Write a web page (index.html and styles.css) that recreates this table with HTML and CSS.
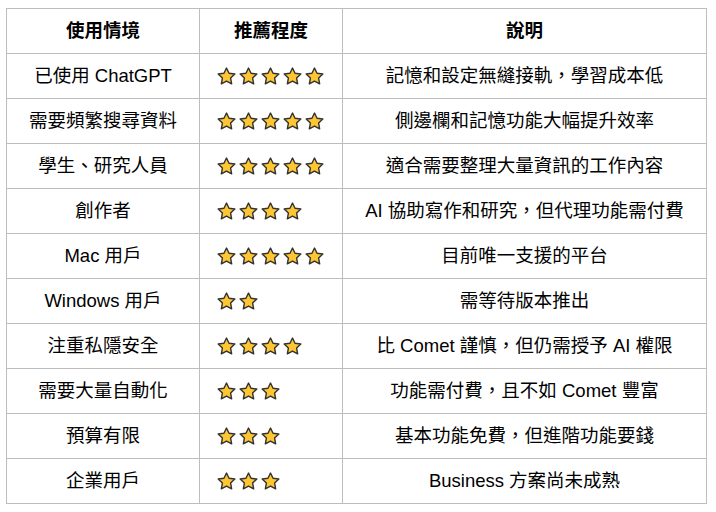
FILE: index.html
```html
<!DOCTYPE html>
<html lang="zh-Hant">
<head>
<meta charset="utf-8">
<link rel="stylesheet" href="styles.css">
</head>
<body>
<svg width="0" height="0" class="defs">
  <defs>
    <symbol id="star" viewBox="0 0 24 24">
      <path d="M12 1.3l3.2 6.6 7.3 1-5.3 5.1 1.3 7.3L12 17.8l-6.5 3.5 1.3-7.3-5.3-5.1 7.3-1z" fill="#FFC633" stroke="#333" stroke-width="1.8" stroke-linejoin="round"/>
    </symbol>
  </defs>
</svg>
<table class="grid">
  <colgroup>
    <col class="c1"><col class="c2"><col class="c3">
  </colgroup>
  <thead>
    <tr><th>使用情境</th><th>推薦程度</th><th>說明</th></tr>
  </thead>
  <tbody>
    <tr><td>已使用 ChatGPT</td><td class="stars"><span class="s5"></span></td><td>記憶和設定無縫接軌，學習成本低</td></tr>
    <tr><td>需要頻繁搜尋資料</td><td class="stars"><span class="s5"></span></td><td>側邊欄和記憶功能大幅提升效率</td></tr>
    <tr><td>學生、研究人員</td><td class="stars"><span class="s5"></span></td><td>適合需要整理大量資訊的工作內容</td></tr>
    <tr><td>創作者</td><td class="stars"><span class="s4"></span></td><td>AI 協助寫作和研究，但代理功能需付費</td></tr>
    <tr><td>Mac 用戶</td><td class="stars"><span class="s5"></span></td><td>目前唯一支援的平台</td></tr>
    <tr><td>Windows 用戶</td><td class="stars"><span class="s2"></span></td><td>需等待版本推出</td></tr>
    <tr><td>注重私隱安全</td><td class="stars"><span class="s4"></span></td><td>比 Comet 謹慎，但仍需授予 AI 權限</td></tr>
    <tr><td>需要大量自動化</td><td class="stars"><span class="s3"></span></td><td>功能需付費，且不如 Comet 豐富</td></tr>
    <tr><td>預算有限</td><td class="stars"><span class="s3"></span></td><td>基本功能免費，但進階功能要錢</td></tr>
    <tr><td>企業用戶</td><td class="stars"><span class="s3"></span></td><td>Business 方案尚未成熟</td></tr>
  </tbody>
</table>
<script>
document.querySelectorAll('.stars span').forEach(function (el) {
  var n = parseInt(el.className.slice(1), 10);
  var html = '';
  for (var i = 0; i < n; i++) {
    html += '<svg class="star" viewBox="0 0 24 24"><use href="#star"/></svg>';
  }
  el.innerHTML = html;
});
</script>
</body>
</html>
```

FILE: styles.css
```css
html, body {
  margin: 0;
  padding: 0;
  background: #fff;
}
body {
  padding: 8px 0 0 6px;
  font-family: "Liberation Sans", "Noto Sans CJK TC", sans-serif;
  font-size: 18.5px;
  color: #000;
}
.defs {
  position: absolute;
  width: 0;
  height: 0;
}
.grid {
  border-collapse: collapse;
  table-layout: fixed;
  width: 700px;
}
.c1 { width: 193px; }
.c2 { width: 143px; }
.c3 { width: 364px; }
.grid th,
.grid td {
  border: 1px solid #bdbdbd;
  height: 44px;
  padding: 0;
  text-align: center;
  vertical-align: middle;
  line-height: 20px;
  white-space: nowrap;
}
.grid th {
  font-weight: bold;
}
.grid td.stars {
  text-align: left;
  padding-left: 17px;
}
.stars span {
  display: flex;
  gap: 3px;
  align-items: center;
}
.star {
  width: 19px;
  height: 19px;
  display: block;
}
```
